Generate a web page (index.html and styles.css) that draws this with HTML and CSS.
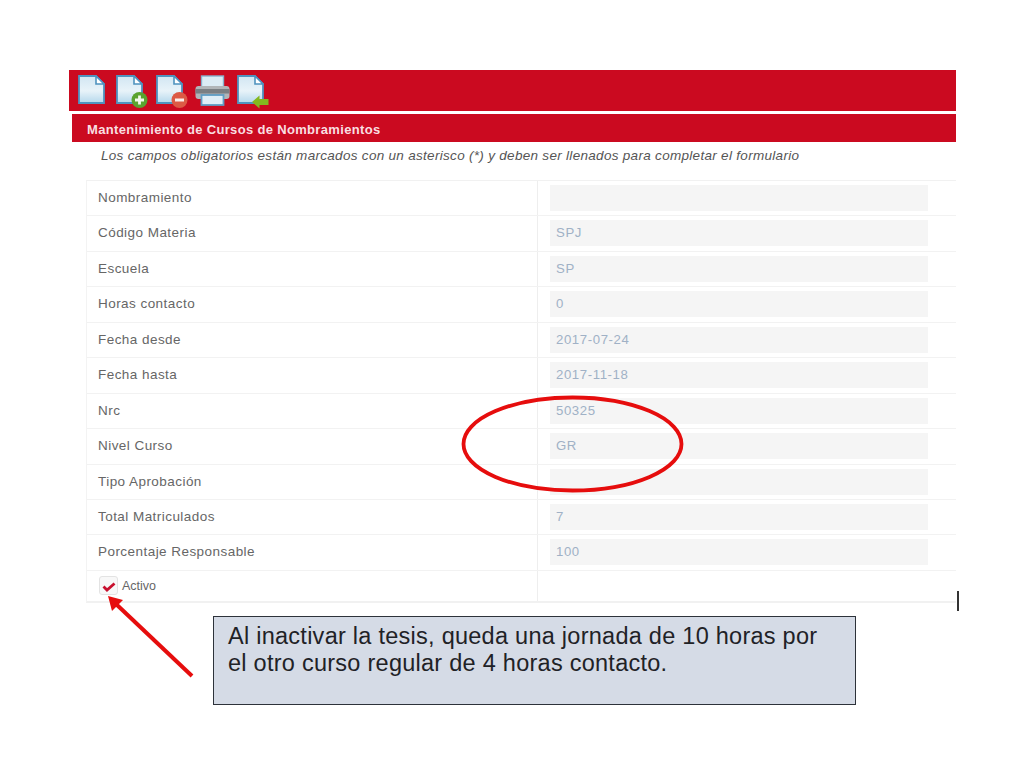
FILE: index.html
```html
<!DOCTYPE html>
<html lang="es">
<head>
<meta charset="utf-8">
<title>Mantenimiento de Cursos de Nombramientos</title>
<link rel="stylesheet" href="styles.css">
</head>
<body>
<main class="slide">
  <svg width="0" height="0" class="defs">
    <defs>
      <linearGradient id="page" x1="0" y1="0" x2="0" y2="1"><stop offset="0" stop-color="#d2e6f2"/><stop offset="0.55" stop-color="#e8f3f9"/><stop offset="1" stop-color="#b5d8ec"/></linearGradient>
      <symbol id="doc" viewBox="0 0 27 29">
        <path d="M1 1H18L26 9V28H1Z" fill="url(#page)" stroke="#4f93bf" stroke-width="1.800"/>
        <path d="M18 1V9H26Z" fill="#fff" stroke="#4f93bf" stroke-width="1.600"/>
      </symbol>
    </defs>
  </svg>
  <div class="toolbar">
    <svg class="icon icon-plain" width="32" height="34" viewBox="0 0 32 34"><use href="#doc" width="27" height="29"/></svg>
    <svg class="icon" width="34" height="34" viewBox="0 0 34 34"><use href="#doc" width="27" height="29"/><circle cx="23.500" cy="25" r="8" fill="#5aa32f"/><path d="M23.500 20.500v9M19 25h9" stroke="#f2f8ea" stroke-width="2.800"/></svg>
    <svg class="icon icon-minus" width="33" height="34" viewBox="0 0 33 34"><use href="#doc" width="27" height="29"/><circle cx="23.500" cy="25" r="8" fill="#dc5a45"/><path d="M19 25h9" stroke="#fbeeea" stroke-width="3"/></svg>
    <svg class="icon icon-print" width="36" height="34" viewBox="0 0 36 34"><rect x="6.500" y="1" width="22" height="12" fill="#dcebf4" stroke="#86b2cd" stroke-width="1.400"/><rect x="0.500" y="11" width="34" height="13" rx="3" fill="#b1b5b8"/><rect x="0.500" y="14" width="34" height="4.500" fill="#7a7f83"/><rect x="6.500" y="20" width="22" height="10" fill="#dfeef7" stroke="#5f9dc4" stroke-width="1.800"/></svg>
    <svg class="icon" width="33" height="34" viewBox="0 0 33 34"><use href="#doc" width="27" height="29"/><path d="M15 27l7.500-6.500v3.500h9v6h-9V33.500Z" fill="#84b81f"/></svg>
  </div>
  <h1 class="title">Mantenimiento de Cursos de Nombramientos</h1>
  <p class="note">Los campos obligatorios están marcados con un asterisco (*) y deben ser llenados para completar el formulario</p>
  <div class="form">
    <div class="row"><span class="label">Nombramiento</span><span class="cell"><span class="field"></span></span></div>
    <div class="row"><span class="label">Código Materia</span><span class="cell"><span class="field">SPJ</span></span></div>
    <div class="row"><span class="label">Escuela</span><span class="cell"><span class="field">SP</span></span></div>
    <div class="row"><span class="label">Horas contacto</span><span class="cell"><span class="field">0</span></span></div>
    <div class="row"><span class="label">Fecha desde</span><span class="cell"><span class="field">2017-07-24</span></span></div>
    <div class="row"><span class="label">Fecha hasta</span><span class="cell"><span class="field">2017-11-18</span></span></div>
    <div class="row"><span class="label">Nrc</span><span class="cell"><span class="field">50325</span></span></div>
    <div class="row"><span class="label">Nivel Curso</span><span class="cell"><span class="field">GR</span></span></div>
    <div class="row"><span class="label">Tipo Aprobación</span><span class="cell"><span class="field"></span></span></div>
    <div class="row"><span class="label">Total Matriculados</span><span class="cell"><span class="field">7</span></span></div>
    <div class="row"><span class="label">Porcentaje Responsable</span><span class="cell"><span class="field">100</span></span></div>
    <div class="row row-check">
      <span class="label check-label">
        <span class="checkbox"><svg width="14" height="12" viewBox="0 0 14 12"><path d="M1.500 6.500L5 10L12.500 3.500" fill="none" stroke="#c8102e" stroke-width="2.800"/></svg></span>
        Activo
      </span>
      <span class="cell"></span>
    </div>
  </div>
  <div class="callout">Al inactivar la tesis, queda una jornada de 10 horas por el otro curso regular de 4 horas contacto.</div>
  <span class="tick"></span>
  <svg class="overlay" width="1024" height="768" viewBox="0 0 1024 768">
    <ellipse cx="572.500" cy="444" rx="109" ry="46.500" fill="none" stroke="#e60d0d" stroke-width="3.800"/>
    <path d="M192 676L116 604" stroke="#e60d0d" stroke-width="4" fill="none"/>
    <path d="M108 596L123 600L112 611Z" fill="#e60d0d"/>
  </svg>
</main>
</body>
</html>
```
FILE: styles.css
```css
* { box-sizing: border-box; }
html, body { margin: 0; background: #fff; }
.slide {
  position: relative;
  width: 1024px;
  height: 768px;
  overflow: hidden;
  padding: 70px 68px 0 69px;
  font-family: "Liberation Sans", Arial, sans-serif;
}
.defs { position: absolute; }
.toolbar {
  display: flex;
  align-items: flex-start;
  gap: 6px;
  height: 41px;
  padding: 5px 0 0 9px;
  background: #cb0a20;
}
.icon { display: block; flex: none; }
.title {
  margin: 3px 0 0 3px;
  height: 28px;
  padding-left: 15px;
  background: #cb0a20;
  color: #f9dfe1;
  font-size: 13px;
  font-weight: bold;
  letter-spacing: 0.33px;
  line-height: 31px;
}
.note {
  margin: 5px 0 0 32px;
  height: 21px;
  color: #555;
  font-size: 13.500px;
  font-style: italic;
  letter-spacing: 0.3px;
  line-height: 17px;
  white-space: nowrap;
}
.form {
  margin: 12px 0 0 17px;
  border-top: 1px solid #f1f1f1;
  border-left: 1px solid #f3f3f3;
  border-bottom: 2px solid #f1f1f1;
  display: grid;
  grid-template-rows: repeat(11, 35.450px) 30px;
}
.row {
  display: grid;
  grid-template-columns: 450px 1fr;
  border-bottom: 1px solid #f2f2f2;
}
.label {
  padding-left: 11px;
  color: #666;
  font-size: 13.500px;
  letter-spacing: 0.45px;
  line-height: 33px;
}
.cell {
  border-left: 1px solid #eeeeee;
  padding: 4px 28px 0 12px;
}
.field {
  display: block;
  height: 26px;
  padding-left: 6px;
  background: #f5f5f5;
  color: #a0b1c6;
  font-size: 13.200px;
  line-height: 25px;
  letter-spacing: 0.6px;
}
.row-check { border-bottom: 0; }
.check-label {
  display: flex;
  align-items: center;
  gap: 4px;
  padding-left: 12px;
  font-size: 12.500px;
  letter-spacing: 0;
  line-height: 30px;
}
.checkbox {
  display: flex;
  align-items: center;
  justify-content: center;
  width: 19px;
  height: 19px;
  border: 1px solid #e3e3e3;
  border-radius: 3px;
  background: #f8f8f8;
}
.callout {
  position: absolute;
  left: 213px;
  top: 616px;
  width: 643px;
  height: 88.500px;
  padding: 6px 30px 6px 14px;
  background: #d5dbe6;
  border: 1.500px solid #2d323a;
  color: #1f2226;
  font-size: 23.500px;
  letter-spacing: 0.26px;
  line-height: 26.500px;
}
.tick {
  position: absolute;
  left: 957px;
  top: 591px;
  width: 2px;
  height: 20px;
  background: #333;
}
.overlay { position: absolute; left: 0; top: 0; pointer-events: none; }
```
